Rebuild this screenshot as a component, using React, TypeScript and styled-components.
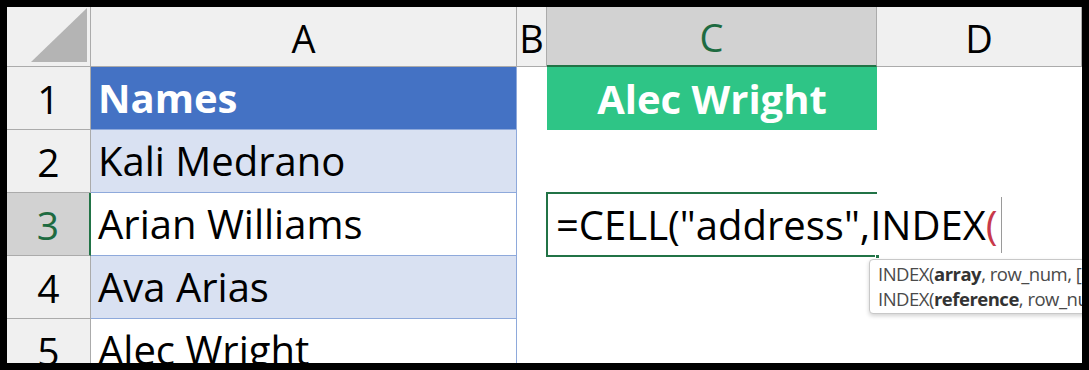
import React from 'react';
import styled, { createGlobalStyle } from 'styled-components';

const GlobalStyle = createGlobalStyle`
  html, body {
    margin: 0;
    padding: 0;
    background: #000;
  }
  * {
    box-sizing: border-box;
  }
`;

const Frame = styled.div`
  width: 1089px;
  height: 370px;
  padding: 7px;
  background: #000;
  font-family: "Open Sans", "Liberation Sans", sans-serif;
`;

const Sheet = styled.div`
  display: grid;
  grid-template-columns: 84px 426px 30px 330px 205px;
  grid-template-rows: 60px repeat(5, 63px);
  width: 1075px;
  height: 356px;
  overflow: hidden;
  background: #fff;
`;

const Corner = styled.div`
  background: #f0f0f0;
  border-right: 1px solid #ababab;
  border-bottom: 1px solid #ababab;
  display: flex;
  align-items: flex-end;
  justify-content: flex-end;
  padding: 0 3px 4px 0;
`;

const ColHeader = styled.div<{ $selected?: boolean }>`
  display: flex;
  align-items: center;
  justify-content: center;
  font-size: 38px;
  line-height: 1;
  padding-top: 2px;
  background: ${(p) => (p.$selected ? '#d2d2d2' : '#f0f0f0')};
  color: ${(p) => (p.$selected ? '#1e6b41' : '#000')};
  border-right: 1px solid #ababab;
  border-bottom: ${(p) => (p.$selected ? '2px solid #217346' : '1px solid #ababab')};
`;

const RowHeader = styled.div<{ $selected?: boolean }>`
  display: flex;
  align-items: center;
  justify-content: center;
  font-size: 39px;
  line-height: 1;
  background: ${(p) => (p.$selected ? '#d2d2d2' : '#f0f0f0')};
  color: ${(p) => (p.$selected ? '#1e6b41' : '#000')};
  border-right: ${(p) => (p.$selected ? '2px solid #217346' : '1px solid #ababab')};
  border-bottom: 1px solid #ababab;
`;

type Band = 'head' | 'band' | 'plain';

const NameCell = styled.div<{ $band: Band }>`
  display: flex;
  align-items: center;
  padding-left: 7px;
  font-size: 40px;
  line-height: 1;
  white-space: nowrap;
  font-weight: ${(p) => (p.$band === 'head' ? 700 : 400)};
  color: ${(p) => (p.$band === 'head' ? '#fff' : '#000')};
  background: ${(p) =>
    p.$band === 'head' ? '#4472c4' : p.$band === 'band' ? '#d9e1f2' : '#fff'};
  border-right: 1px solid #8ea9db;
  border-bottom: 1px solid #8ea9db;
`;

const Blank = styled.div`
  background: #fff;
`;

const ResultCell = styled.div`
  display: flex;
  align-items: center;
  justify-content: center;
  background: #2ec586;
  color: #fff;
  font-size: 40px;
  font-weight: 700;
  line-height: 1;
  white-space: nowrap;
`;

const EditCell = styled.div`
  position: relative;
  display: flex;
  align-items: center;
  padding-left: 9px;
  z-index: 2;
`;

const SelectionBox = styled.div`
  position: absolute;
  left: -1px;
  top: -1px;
  width: 331px;
  height: 65px;
  border: 2px solid #217346;
  border-right: none;
  pointer-events: none;
`;

const FillHandle = styled.div`
  position: absolute;
  left: 328px;
  top: 61px;
  width: 5px;
  height: 5px;
  background: #217346;
  border: 1px solid #fff;
`;

const Formula = styled.div`
  position: relative;
  display: flex;
  align-items: center;
  font-size: 40px;
  line-height: 1;
  white-space: nowrap;
  color: #000;
`;

const Paren = styled.span`
  color: #c8394a;
`;

const Caret = styled.span`
  display: inline-block;
  width: 1px;
  height: 56px;
  margin-left: 3px;
  background: #9a9a9a;
`;

const Tip = styled.div`
  position: absolute;
  left: 322px;
  top: 66px;
  width: 280px;
  height: 55px;
  padding: 1px 0 0 8px;
  background: #fff;
  border: 1px solid #c8c8c8;
  border-radius: 4px;
  box-shadow: 0 2px 4px rgba(0, 0, 0, 0.18);
  color: #4a4a4a;
  font-family: "Open Sans", "Liberation Sans", sans-serif;
  font-size: 18.5px;
  letter-spacing: -0.5px;
  line-height: 25px;
  white-space: nowrap;
  z-index: 3;

  b {
    color: #333;
    font-weight: 700;
  }
`;

const names: { label: string; band: Band }[] = [
  { label: 'Names', band: 'head' },
  { label: 'Kali Medrano', band: 'band' },
  { label: 'Arian Williams', band: 'plain' },
  { label: 'Ava Arias', band: 'band' },
  { label: 'Alec Wright', band: 'plain' },
];

const App = () => {
  return (
    <Frame>
      <GlobalStyle />
      <Sheet>
        <Corner>
          <svg width="56" height="54" viewBox="0 0 56 54">
            <polygon points="0,54 56,54 56,0" fill="#b4b4b4" />
          </svg>
        </Corner>
        <ColHeader>A</ColHeader>
        <ColHeader>B</ColHeader>
        <ColHeader $selected>C</ColHeader>
        <ColHeader>D</ColHeader>

        {names.map((n, i) => {
          const row = i + 1;
          return (
            <React.Fragment key={row}>
              <RowHeader $selected={row === 3}>{row}</RowHeader>
              <NameCell $band={n.band}>{n.label}</NameCell>
              <Blank />
              {row === 1 && <ResultCell>Alec Wright</ResultCell>}
              {row === 3 && (
                <EditCell>
                  <SelectionBox />
                  <FillHandle />
                  <Formula>
                    =CELL("address",INDEX<Paren>(</Paren>
                    <Caret />
                  </Formula>
                  <Tip>
                    <div>
                      INDEX(<b>array</b>, row_num, [column_num])
                    </div>
                    <div>
                      INDEX(<b>reference</b>, row_num, [column_num], [area_num])
                    </div>
                  </Tip>
                </EditCell>
              )}
              {row !== 1 && row !== 3 && <Blank />}
              <Blank />
            </React.Fragment>
          );
        })}
      </Sheet>
    </Frame>
  );
};

export default App;
